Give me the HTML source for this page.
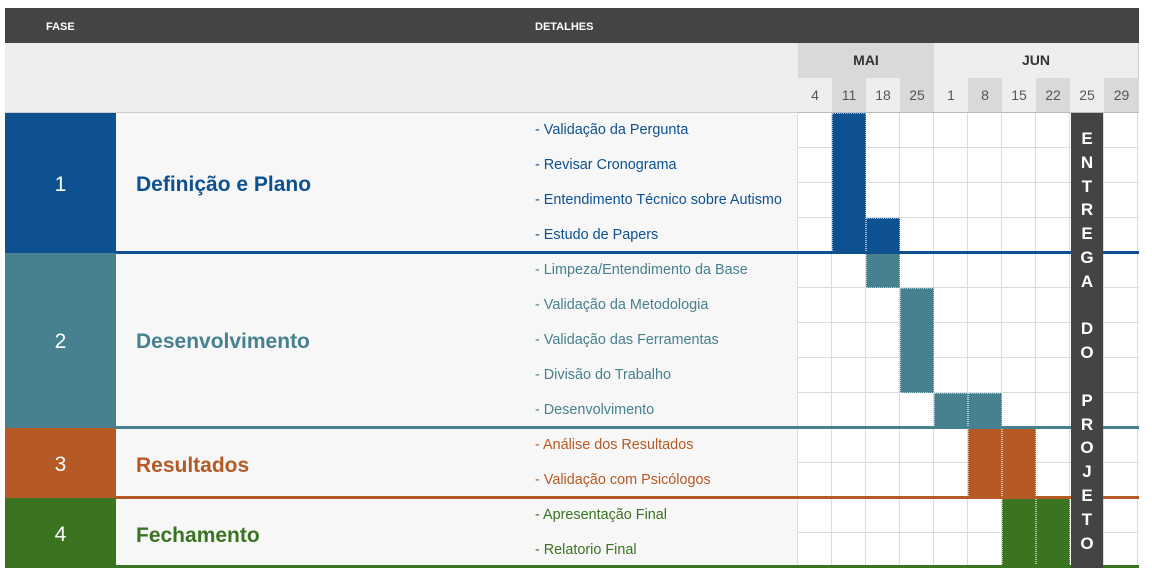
<!DOCTYPE html>
<html><head><meta charset="utf-8"><style>
*{margin:0;padding:0;box-sizing:border-box}
body{width:1152px;height:579px;background:#fff;position:relative;overflow:hidden;font-family:"Liberation Sans",Arial,sans-serif}
.a{position:absolute}
.hd{left:5px;top:8px;width:1134px;height:35px;background:#444;color:#fff;font-weight:bold;font-size:11px}
.sub{left:5px;top:43px;width:793px;height:70px;background:#eee;border-bottom:1px solid #ccc}
.m{top:43px;height:35px;font-weight:bold;font-size:14px;color:#333;text-align:center;line-height:35px}
.w{top:78px;width:34px;height:35px;font-size:14px;color:#555;text-align:center;line-height:35px;border-bottom:1px solid #bbb}
.num{left:5px;width:111px;color:#fff;font-size:21px;text-align:center;padding-top:3px}
.name{left:116px;width:414px;background:#f7f7f7;font-weight:bold;font-size:21px;padding-left:20px;padding-top:3px}
.det{left:530px;width:268px;background:#f7f7f7;border-right:1px solid #ddd}
.det div{height:35px;line-height:35px;font-size:14.4px;padding-left:5px}
.grid{left:798px;top:113px;width:341px;height:455px;background-color:#fff;
background-image:repeating-linear-gradient(to right,transparent 0 33px,#dcdcdc 33px 34px),repeating-linear-gradient(to bottom,transparent 0 34px,#dcdcdc 34px 35px)}
.b{width:34px;height:35px;border:1px dotted rgba(255,255,255,.6)}
.ln{left:116px;width:1023px;height:3px}
</style></head><body>
<div class="a hd"><span class="a" style="left:41px;top:13px">FASE</span><span class="a" style="left:530px;top:13px">DETALHES</span></div>
<div class="a sub"></div>
<div class="a m" style="left:798px;width:136px;background:#d9d9d9">MAI</div>
<div class="a m" style="left:934px;width:205px;background:#eee;border-right:1px solid #ccc">JUN</div>
<div class="a w" style="left:798px;background:#eee">4</div>
<div class="a w" style="left:832px;background:#d9d9d9">11</div>
<div class="a w" style="left:866px;background:#eee">18</div>
<div class="a w" style="left:900px;background:#d9d9d9">25</div>
<div class="a w" style="left:934px;background:#eee">1</div>
<div class="a w" style="left:968px;background:#d9d9d9">8</div>
<div class="a w" style="left:1002px;background:#eee">15</div>
<div class="a w" style="left:1036px;background:#d9d9d9">22</div>
<div class="a w" style="left:1070px;background:#eee">25</div>
<div class="a w" style="left:1104px;background:#d9d9d9;width:35px">29</div>

<div class="a num" style="top:113px;height:140px;line-height:137px;background:#0d5191">1</div>
<div class="a num" style="top:253px;height:175px;line-height:172px;background:#47808e">2</div>
<div class="a num" style="top:428px;height:70px;line-height:67px;background:#b55a25">3</div>
<div class="a num" style="top:498px;height:70px;line-height:67px;background:#3a7421">4</div>

<div class="a name" style="top:113px;height:140px;line-height:137px;color:#0d5191">Definição e Plano</div>
<div class="a name" style="top:253px;height:175px;line-height:172px;color:#47808e">Desenvolvimento</div>
<div class="a name" style="top:428px;height:70px;line-height:69px;color:#b55a25">Resultados</div>
<div class="a name" style="top:498px;height:70px;line-height:69px;color:#3a7421">Fechamento</div>

<div class="a det" style="top:113px;height:455px">
<div style="color:#0d5191">- Validação da Pergunta</div>
<div style="color:#0d5191">- Revisar Cronograma</div>
<div style="color:#0d5191">- Entendimento Técnico sobre Autismo</div>
<div style="color:#0d5191">- Estudo de Papers</div>
<div style="color:#47808e">- Limpeza/Entendimento da Base</div>
<div style="color:#47808e">- Validação da Metodologia</div>
<div style="color:#47808e">- Validação das Ferramentas</div>
<div style="color:#47808e">- Divisão do Trabalho</div>
<div style="color:#47808e">- Desenvolvimento</div>
<div style="color:#b55a25">- Análise dos Resultados</div>
<div style="color:#b55a25">- Validação com Psicólogos</div>
<div style="color:#3a7421">- Apresentação Final</div>
<div style="color:#3a7421">- Relatorio Final</div>
</div>

<div class="a grid"></div>
<div class="a b" style="left:832px;top:113px;height:140px;background:#0d5191"></div>
<div class="a b" style="left:866px;top:218px;background:#0d5191"></div>
<div class="a b" style="left:866px;top:253px;background:#47808e"></div>
<div class="a b" style="left:900px;top:288px;height:105px;background:#47808e"></div>
<div class="a b" style="left:934px;top:393px;background:#47808e"></div>
<div class="a b" style="left:968px;top:393px;background:#47808e"></div>
<div class="a b" style="left:968px;top:428px;height:70px;background:#b55a25"></div>
<div class="a b" style="left:1002px;top:428px;height:70px;background:#b55a25"></div>
<div class="a b" style="left:1002px;top:498px;height:70px;background:#3a7421"></div>
<div class="a b" style="left:1036px;top:498px;height:70px;background:#3a7421"></div>

<div class="a ln" style="top:251px;background:#0d5191"></div>
<div class="a ln" style="top:426px;background:#47808e"></div>
<div class="a ln" style="top:496px;background:#b55a25"></div>
<div class="a ln" style="top:565px;background:#3a7421"></div>

<div class="a" style="left:1071px;top:113px;width:32px;height:455px;background:#444;color:#fff;font-weight:bold;font-size:17px;text-align:center;line-height:23.8px;padding-top:14px">E<br>N<br>T<br>R<br>E<br>G<br>A<br>&nbsp;<br>D<br>O<br>&nbsp;<br>P<br>R<br>O<br>J<br>E<br>T<br>O</div>
</body></html>
